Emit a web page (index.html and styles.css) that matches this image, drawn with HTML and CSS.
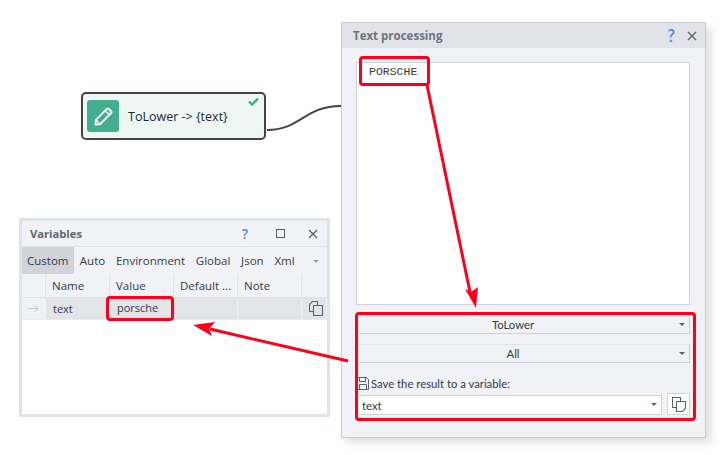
FILE: index.html
```html
<!DOCTYPE html>
<html lang="en">

<head>
    <meta charset="UTF-8">
    <meta name="viewport" content="width=device-width, initial-scale=1.0">
    <title>Text processing</title>
    <link rel="stylesheet" href="styles.css">
</head>

<body>
    <div class="canvas">
        <!-- connection between the node and the window -->
        <svg class="overlay" width="724" height="455">
            <path d="M267 130 C 301 130 304 106 341 106" fill="none" stroke="#444" stroke-width="2"/>
        </svg>

        <div class="node">
            <div class="node-icon">
                <svg width="19" height="19" viewBox="0 0 20 20" fill="none" stroke="#fff" stroke-width="2" stroke-linejoin="round">
                    <path d="M1.500 18.500 L2 13.500 L13.500 2 Q14.500 1 15.500 2 L18 4.500 Q19 5.500 18 6.500 L6.500 18 Z"/>
                    <path d="M2 13.500 L6.500 18 M12 4 L16.500 8.500" stroke-width="1.400"/>
                </svg>
            </div>
            <span class="node-label">ToLower -&gt; {text}</span>
            <svg class="node-check" width="11" height="9" viewBox="0 0 11 9">
                <path d="M1 4.500 L4 7.500 L10 1.500" fill="none" stroke="#2fb48c" stroke-width="2.400"/>
            </svg>
        </div>

        <div class="window vars">
            <div class="vars-title">
                <span class="title-text">Variables</span>
                <span class="help">?</span>
                <span class="maximize"></span>
                <svg class="close" width="10" height="10" viewBox="0 0 10 10"><path d="M1 1 L9 9 M9 1 L1 9" stroke="#555d6b" stroke-width="1.300"/></svg>
            </div>
            <div class="tabs">
                <span class="tab active">Custom</span>
                <span class="tab">Auto</span>
                <span class="tab">Environment</span>
                <span class="tab">Global</span>
                <span class="tab">Json</span>
                <span class="tab">Xml</span>
                <span class="tab-arrow"></span>
            </div>
            <div class="grid-head">
                <span class="cell c-mark"></span>
                <span class="cell c-name">Name</span>
                <span class="cell c-value">Value</span>
                <span class="cell c-default">Default ...</span>
                <span class="cell c-note">Note</span>
                <span class="cell c-end"></span>
            </div>
            <div class="grid-row">
                <span class="cell c-mark row-mark">
                    <svg width="11" height="9" viewBox="0 0 11 9"><path d="M0 4.500 H10 M6.500 1 L10 4.500 L6.500 8" fill="none" stroke="#c4c7cc"/></svg>
                </span>
                <span class="cell c-name">text</span>
                <span class="cell c-value value-up">porsche</span>
                <span class="cell c-default"></span>
                <span class="cell c-note"></span>
                <span class="cell c-end">
                    <svg width="14" height="15" viewBox="0 0 14 15" fill="none" stroke="#596273" stroke-width="1.100">
                        <path d="M.5 10.500 V3.500 L3.500 .5 H8.500 V4.500"/>
                        <path d="M.5 10.500 H4.500"/>
                        <path d="M4.500 4.500 H13.500 V14.500 H4.500 Z"/>
                    </svg>
                </span>
            </div>
            <div class="grid-empty"></div>
        </div>

        <div class="window proc">
            <div class="proc-title">
                <span class="title-text">Text processing</span>
                <span class="help">?</span>
                <svg class="close" width="10" height="10" viewBox="0 0 10 10"><path d="M1 1 L9 9 M9 1 L1 9" stroke="#5f6773" stroke-width="1.500"/></svg>
            </div>
            <div class="proc-body">
                <div class="textarea">PORSCHE</div>
                <div class="combo combo-first">ToLower<span class="arrow"></span></div>
                <div class="combo combo-second">All<span class="arrow"></span></div>
                <div class="save-label">
                    <svg width="12" height="13" viewBox="0 0 12 13" fill="none" stroke="#596273">
                        <path d="M.5 .5 H9.500 L11.500 2.500 V12.500 H.5 Z"/>
                        <path d="M2.500 .5 V4.500 H8.500 V.5 M2.500 12.500 V7.500 H9.500 V12.500"/>
                    </svg>
                    <span>Save the result to a variable:</span>
                </div>
                <div class="save-row">
                    <div class="var-input">text<span class="arrow"></span></div>
                    <div class="var-button">
                        <svg width="14" height="15" viewBox="0 0 14 15" fill="none" stroke="#596273" stroke-width="1.100">
                            <path d="M4.500 10.500 H.5 V.5 H8.500 V4.500"/>
                            <path d="M4.500 4.500 H13.500 V11.500 L10.500 14.500 H4.500 Z"/>
                        </svg>
                    </div>
                </div>
            </div>
        </div>

        <!-- red annotations -->
        <div class="mark mark-text"></div>
        <div class="mark mark-value"></div>
        <div class="mark mark-form"></div>
        <svg class="overlay" width="724" height="455">
            <path d="M427 85 L470 292" stroke="#fe0019" stroke-width="3" fill="none"/>
            <path d="M476 308 L465 289 L471 292 L478 287 Z" fill="#fe0019"/>
            <path d="M348 361 L210 329" stroke="#fe0019" stroke-width="3" fill="none"/>
            <path d="M193 325 L215 322 L209 329 L212 336 Z" fill="#fe0019"/>
        </svg>
    </div>
</body>

</html>
```

FILE: styles.css
```css
body {
    margin: 0;
    background-color: #fff;
    font-family: "Open Sans", "Noto Sans", sans-serif;
    font-size: 11.5px;
    color: #333a4a;
}

.canvas {
    position: relative;
    width: 724px;
    height: 455px;
    overflow: hidden;
}

.overlay {
    position: absolute;
    left: 0;
    top: 0;
    pointer-events: none;
}

/* node */
.node {
    position: absolute;
    left: 81px;
    top: 92px;
    width: 177px;
    height: 44px;
    display: flex;
    align-items: center;
    padding-left: 4px;
    background-color: #edf6f2;
    border: 2px solid #444;
    border-radius: 5px;
}

.node-icon {
    width: 32px;
    height: 32px;
    display: flex;
    align-items: center;
    justify-content: center;
    background-color: #43ae8f;
    border-radius: 3px;
}

.node-label {
    margin-left: 9px;
    font-size: 12.5px;
    color: #23263a;
}

.node-check {
    position: absolute;
    right: 5px;
    top: 3px;
}

/* windows */
.window {
    position: absolute;
    box-sizing: border-box;
    display: flex;
    flex-direction: column;
    background-color: #f0f2f6;
}

.title-text {
    font-weight: 700;
    flex: 1;
}

.help {
    color: #4f86f0;
    font-weight: 600;
}

/* variables window */
.vars {
    left: 19px;
    top: 218px;
    width: 311px;
    height: 199px;
    border: 3px solid #dfe2e6;
}

.vars-title {
    height: 26px;
    flex: none;
    display: flex;
    align-items: center;
    padding-left: 8px;
    padding-right: 9px;
    border-bottom: 1px solid #dfe2e6;
    box-sizing: border-box;
}

.vars-title .title-text {
    color: #5f6773;
    font-size: 11.2px;
}

.vars-title .help {
    font-size: 14px;
    margin-right: 28px;
}

.maximize {
    width: 7px;
    height: 7px;
    border: 1px solid #555d6b;
    margin-right: 23px;
}

.tabs {
    height: 27px;
    flex: none;
    display: flex;
    align-items: stretch;
}

.tab {
    display: flex;
    align-items: center;
    padding: 0 5.400px;
}

.tab.active {
    padding: 0 6px 0 5px;
    background-color: #d0d3d8;
}

.tab-arrow {
    width: 0;
    height: 0;
    margin: 13px 0 0 13px;
    border: 3px solid transparent;
    border-top: 3px solid #9a9ea6;
}

.grid-head,
.grid-row {
    display: flex;
    flex: none;
}

.grid-head {
    height: 24px;
    border-bottom: 1px solid #dfe2e6;
    box-sizing: border-box;
}

.grid-row {
    height: 21px;
    border-bottom: 1px solid #e9ebee;
    font-size: 11px;
}

.cell {
    box-sizing: border-box;
    display: flex;
    align-items: center;
    padding-left: 6px;
    border-right: 1px solid #dfe2e6;
}

.grid-row .cell {
    padding-left: 7px;
    background-color: #e2e4e8;
    border-right: 1px solid #f0f2f6;
}

.grid-row .row-mark {
    padding-left: 6px;
    background-color: #f0f2f6;
}

.c-mark { width: 24px; }
.c-name { width: 64px; }
.c-value { width: 64px; }
.c-default { width: 64px; }
.c-note { width: 64px; }
.c-end { flex: 1; border-right: none; }

.value-up {
    padding-bottom: 3px;
}

.grid-empty {
    flex: 1;
    background-color: #fff;
}

/* text processing window */
.proc {
    left: 341px;
    top: 22px;
    width: 365px;
    height: 416px;
    border: 1px solid #c8cbd0;
    box-shadow: 5px 5px 8px rgba(0, 0, 0, 0.13);
    font-family: "Lato", "Open Sans", sans-serif;
    font-size: 11.300px;
}

.proc-title {
    height: 25px;
    flex: none;
    display: flex;
    align-items: center;
    padding-left: 11px;
    padding-right: 8px;
    background-color: #e1e3e8;
}

.proc-title .title-text {
    color: #6b7280;
    font-family: "Open Sans", sans-serif;
    font-size: 11.5px;
}

.proc-title .help {
    font-size: 17px;
    margin-right: 12px;
}

.proc-body {
    flex: 1;
    display: flex;
    flex-direction: column;
    padding: 14px 15px 0 14px;
}

.textarea {
    box-sizing: border-box;
    height: 243px;
    padding: 2px 12px;
    background-color: #fff;
    border: 1px solid #cfd2d8;
    font-family: "Liberation Mono", monospace;
    font-size: 11.500px;
    line-height: 13px;
    color: #3a3a3a;
}

.combo {
    position: relative;
    box-sizing: border-box;
    height: 19px;
    display: flex;
    align-items: center;
    justify-content: center;
    padding-right: 20px;
    border: 1px solid #cfd2d8;
    border-top-color: #e1e3e8;
}

.combo-first {
    margin-top: 10px;
}

.combo-second {
    margin-top: 10px;
}

.arrow {
    position: absolute;
    right: 4px;
    top: 7px;
    width: 0;
    height: 0;
    border: 3px solid transparent;
    border-top: 3px solid #596273;
}

.save-label {
    display: flex;
    align-items: center;
    gap: 2px;
    height: 16px;
    margin-top: 12px;
    margin-left: 1px;
}

.save-row {
    display: flex;
    align-items: flex-end;
    gap: 5px;
    margin-top: 2px;
}

.var-input {
    position: relative;
    box-sizing: border-box;
    flex: 1;
    height: 20px;
    display: flex;
    align-items: center;
    padding-left: 5px;
    background-color: #fff;
    border: 1px solid #cfd2d8;
}

.var-button {
    box-sizing: border-box;
    width: 23px;
    height: 22px;
    display: flex;
    align-items: center;
    justify-content: center;
    background-color: #fff;
    border: 1px solid #cfd2d8;
}

/* red annotation frames */
.mark {
    position: absolute;
    box-sizing: border-box;
    border: 3px solid #fe0019;
    border-radius: 4px;
}

.mark-text {
    left: 359px;
    top: 56px;
    width: 71px;
    height: 30px;
}

.mark-value {
    left: 106px;
    top: 296px;
    width: 68px;
    height: 25px;
}

.mark-form {
    left: 355px;
    top: 312px;
    width: 341px;
    height: 109px;
}
```
